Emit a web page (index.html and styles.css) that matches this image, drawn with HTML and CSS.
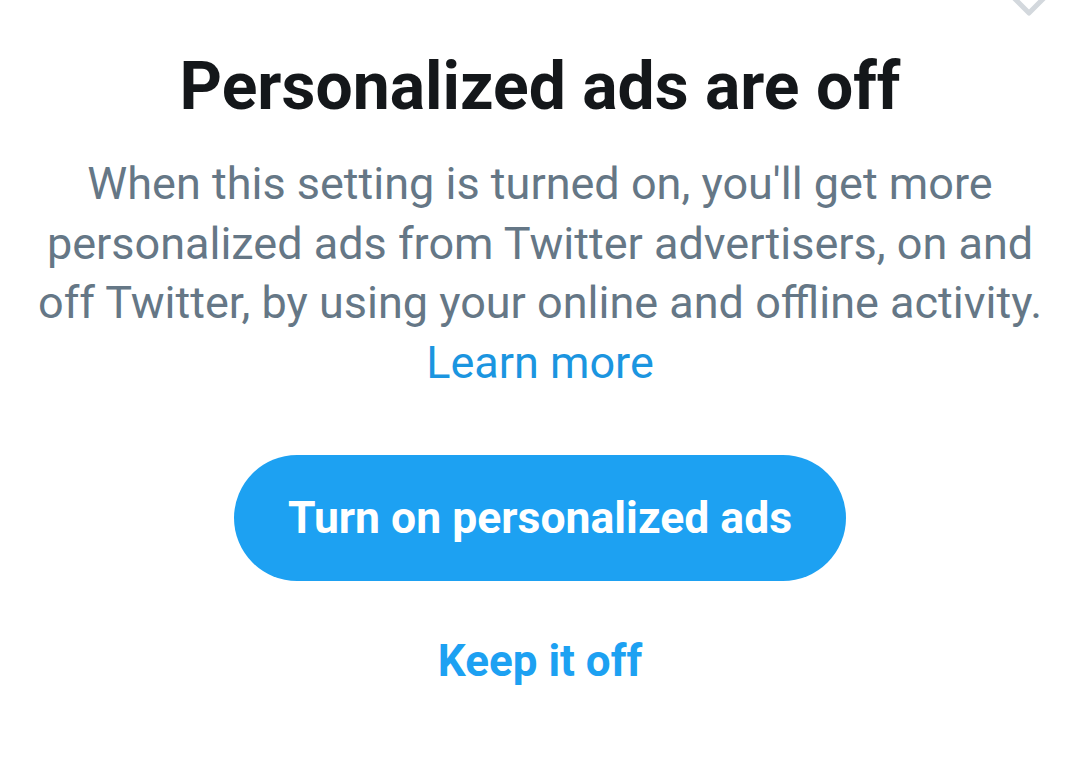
FILE: index.html
```html
<!DOCTYPE html>
<html lang="en">
<head>
<meta charset="utf-8">
<title>Personalized ads are off</title>
<link rel="stylesheet" href="styles.css">
</head>
<body>
<main class="sheet">
  <svg class="handle" width="50" height="20" viewBox="0 0 50 20" aria-hidden="true">
    <polyline points="2,-4 19,13 36,-4" fill="none" stroke="#d3d8dd" stroke-width="5" stroke-linecap="round" stroke-linejoin="round"/>
  </svg>
  <h1 class="title">Personalized ads are off</h1>
  <p class="desc">When this setting is turned on, you'll get more personalized ads from Twitter advertisers, on and off Twitter, by using your online and offline activity. <a class="link" href="#">Learn more</a></p>
  <button class="primary">Turn on personalized ads</button>
  <button class="secondary">Keep it off</button>
</main>
</body>
</html>
```
FILE: styles.css
```css
html, body {
  margin: 0;
  padding: 0;
  background: #ffffff;
}
body {
  width: 1080px;
  height: 758px;
  overflow: hidden;
  font-family: Roboto, "Liberation Sans", sans-serif;
}
.sheet {
  position: relative;
  display: flex;
  flex-direction: column;
  align-items: center;
  padding: 47px 18px 0;
}
.handle {
  position: absolute;
  top: 0;
  left: 1010px;
}
.title {
  margin: 0;
  font-size: 66px;
  line-height: 80px;
  font-weight: 700;
  color: #14171a;
  text-align: center;
}
.desc {
  margin: 27px 0 0;
  font-size: 45px;
  line-height: 59.5px;
  font-weight: 400;
  color: #657786;
  text-align: center;
}
.link {
  color: #1b95e0;
  text-decoration: none;
}
.primary {
  margin-top: 63px;
  width: 612px;
  height: 126px;
  border: none;
  border-radius: 63px;
  background: #1da1f2;
  color: #ffffff;
  font-family: Roboto, "Liberation Sans", sans-serif;
  font-size: 44.5px;
  font-weight: 700;
  padding: 0;
}
.secondary {
  margin-top: 50px;
  border: none;
  background: none;
  padding: 0;
  font-family: Roboto, "Liberation Sans", sans-serif;
  font-size: 44px;
  line-height: 60px;
  font-weight: 700;
  color: #1da1f2;
}
```
